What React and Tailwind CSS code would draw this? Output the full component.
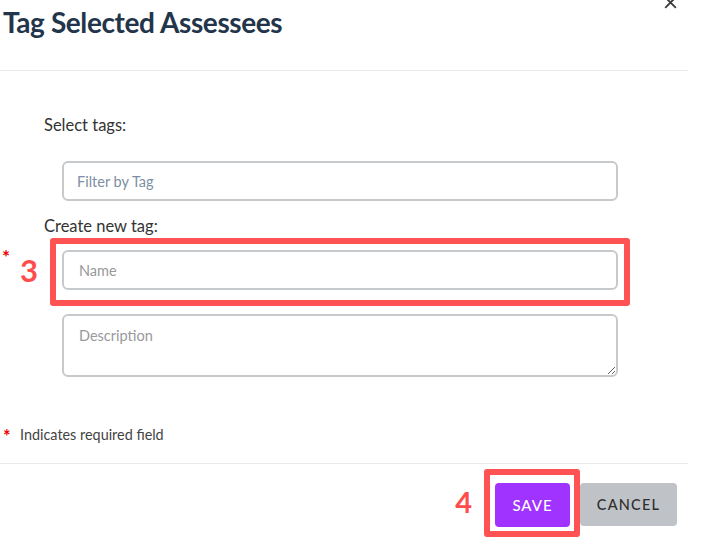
import { useState } from "react";

const CloseIcon = () => (
  <svg className="w-[13px] h-[13px] text-[#3a3a3a]" viewBox="0 0 14 14" fill="none" stroke="currentColor">
    <path strokeWidth={2} strokeLinecap="square" d="M2 2l10 10M12 2L2 12" />
  </svg>
);

export default function App() {
  const [name, setName] = useState("");
  const [desc, setDesc] = useState("");
  const [filter, setFilter] = useState("");

  return (
    <div className="w-[704px] h-[549px] bg-white overflow-hidden font-['Lato',sans-serif] text-[#333]">
      <div className="w-[688px]">
        {/* ── Header ── */}
        <div className="h-[71px] border-b border-[#ebebeb] flex justify-between items-start">
          <h1 className="pl-[3px] pt-[5px] text-[28px] leading-[34px] font-bold text-[#23354a] tracking-[-0.4px]">
            Tag Selected Assessees
          </h1>
          <button className="mt-[-4px] mr-[11px]">
            <CloseIcon />
          </button>
        </div>

        {/* ── Body ── */}
        <div className="pb-[18px]">
          <p className="mt-[42px] pl-[44px] text-[16.5px] leading-[24px]">Select tags:</p>
          <input
            value={filter}
            onChange={(e) => setFilter(e.target.value)}
            placeholder="Filter by Tag"
            className="mt-[24px] ml-[62px] w-[556px] h-[40px] border-2 border-[#c6cacd] rounded-[6px] px-[13px] text-[14.5px] outline-none placeholder:text-[#7d8fa3]"
          />
          <p className="mt-[13px] pl-[44px] text-[16.5px] leading-[24px]">Create new tag:</p>

          <div className="flex items-start">
            <div className="w-[50px] flex items-start">
              <span className="ml-[2px] mt-[12px] text-[#e00] text-[19px] font-bold leading-[14px]">*</span>
              <span className="ml-[10px] mt-[15px] text-[#ff4d4d] text-[31px] leading-[34px] font-bold">3</span>
            </div>
            <div className="w-[580px] border-[6px] border-[#ff5252] rounded-[3px] pt-[6px] pb-[10px] px-[6px]">
              <input
                value={name}
                onChange={(e) => setName(e.target.value)}
                placeholder="Name"
                className="w-[556px] h-[40px] border-2 border-[#c6cacd] rounded-[6px] px-[15px] text-[14.5px] outline-none placeholder:text-[#999]"
              />
            </div>
          </div>

          <textarea
            value={desc}
            onChange={(e) => setDesc(e.target.value)}
            placeholder="Description"
            className="block mt-[8px] ml-[62px] w-[556px] h-[63px] border-2 border-[#c6cacd] rounded-[6px] px-[15px] pt-[10px] text-[14.5px] leading-[20px] outline-none placeholder:text-[#999]"
          />

          <div className="mt-[48px] flex items-start text-[14.4px] leading-[20px] text-[#444]">
            <span className="ml-[3px] w-[17px] text-[#e00] font-bold text-[18px] leading-[14px] mt-[4px]">*</span>
            <span>Indicates required field</span>
          </div>
        </div>

        {/* ── Footer ── */}
        <div className="border-t border-[#ebebeb] pt-[5px] pr-[11px] flex justify-end items-start">
          <span className="mt-[16px] mr-[12px] text-[#ff4d4d] text-[29px] leading-[34px] font-bold">4</span>
          <div className="border-[6px] border-[#ff5252] rounded-[3px] pt-[8px] pb-[4px] pl-[5px] pr-[4px]">
            <button className="w-[75px] h-[44px] rounded-[4px] bg-[#a033ff] text-white text-[15px] tracking-[1px] font-medium">
              SAVE
            </button>
          </div>
          <button className="mt-[14px] w-[97px] h-[43px] rounded-[4px] bg-[#bfc3c7] text-[#2e2e2e] text-[14.5px] tracking-[1.2px] font-medium">
            CANCEL
          </button>
        </div>
      </div>
    </div>
  );
}
